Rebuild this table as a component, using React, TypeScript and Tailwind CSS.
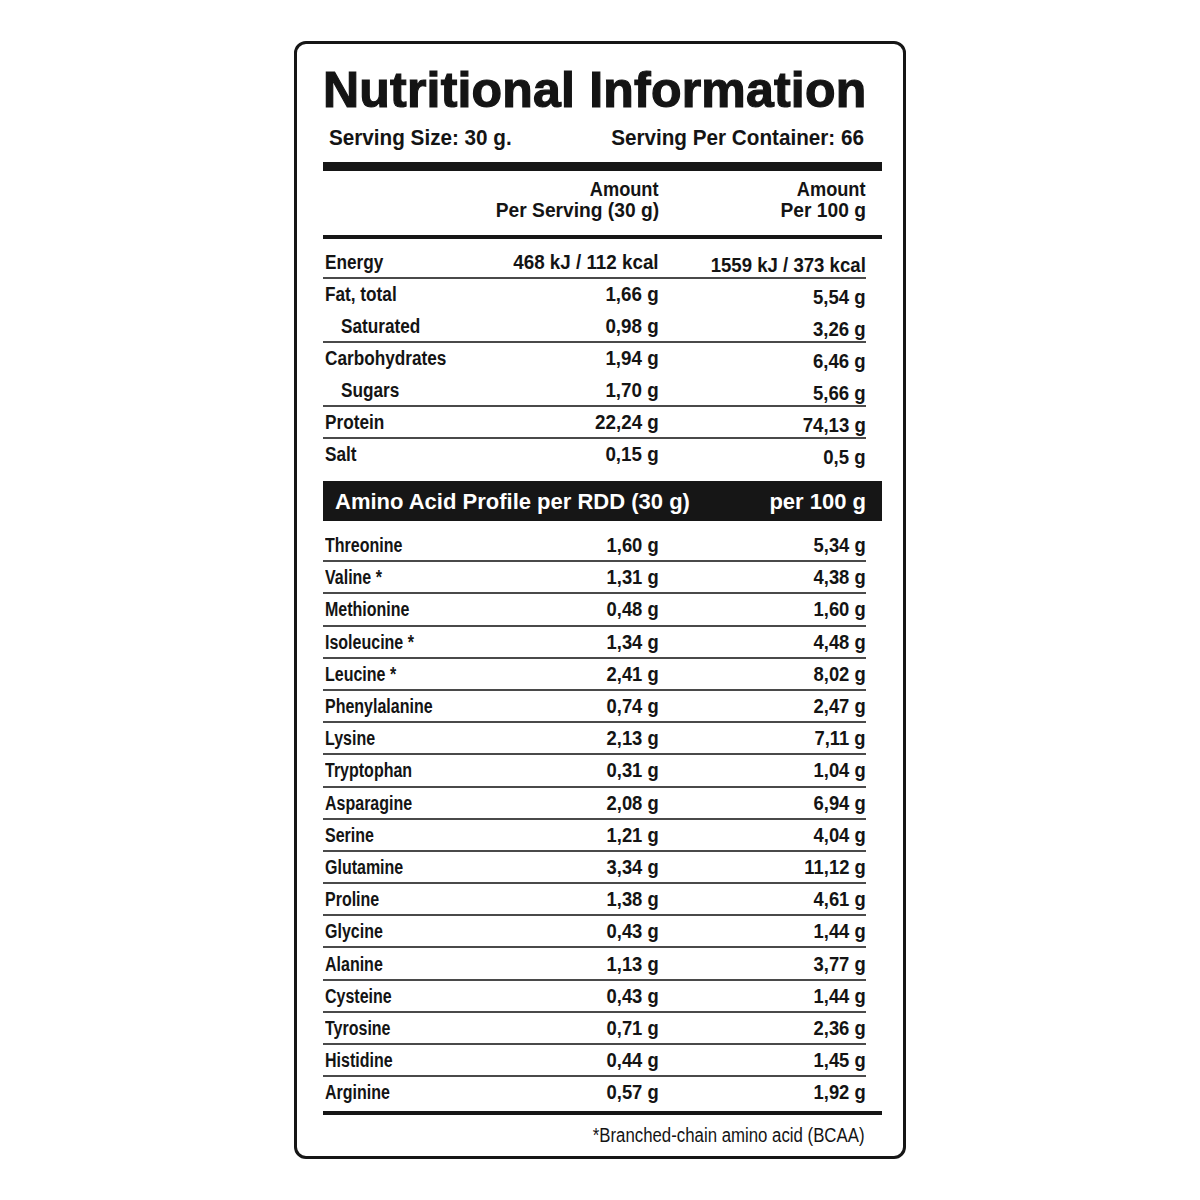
import type { ReactNode } from "react";

const sans = "font-['Liberation_Sans',Arial,sans-serif]";

interface Row {
  label: string;
  a: string;
  b: string;
  indent?: boolean;
  line?: boolean;
}

const nutrients: Row[] = [
  { label: "Energy", a: "468 kJ / 112 kcal", b: "1559 kJ / 373 kcal", line: true },
  { label: "Fat, total", a: "1,66 g", b: "5,54 g" },
  { label: "Saturated", a: "0,98 g", b: "3,26 g", indent: true, line: true },
  { label: "Carbohydrates", a: "1,94 g", b: "6,46 g" },
  { label: "Sugars", a: "1,70 g", b: "5,66 g", indent: true, line: true },
  { label: "Protein", a: "22,24 g", b: "74,13 g", line: true },
  { label: "Salt", a: "0,15 g", b: "0,5 g" },
];

const aminos: [string, string, string][] = [
  ["Threonine", "1,60 g", "5,34 g"],
  ["Valine *", "1,31 g", "4,38 g"],
  ["Methionine", "0,48 g", "1,60 g"],
  ["Isoleucine *", "1,34 g", "4,48 g"],
  ["Leucine *", "2,41 g", "8,02 g"],
  ["Phenylalanine", "0,74 g", "2,47 g"],
  ["Lysine", "2,13 g", "7,11 g"],
  ["Tryptophan", "0,31 g", "1,04 g"],
  ["Asparagine", "2,08 g", "6,94 g"],
  ["Serine", "1,21 g", "4,04 g"],
  ["Glutamine", "3,34 g", "11,12 g"],
  ["Proline", "1,38 g", "4,61 g"],
  ["Glycine", "0,43 g", "1,44 g"],
  ["Alanine", "1,13 g", "3,77 g"],
  ["Cysteine", "0,43 g", "1,44 g"],
  ["Tyrosine", "0,71 g", "2,36 g"],
  ["Histidine", "0,44 g", "1,45 g"],
  ["Arginine", "0,57 g", "1,92 g"],
];

// condensed look: squeeze Liberation Sans horizontally (no narrow face installed)
const Cond = ({ children, scale, right }: { children: ReactNode; scale: string; right?: boolean }) => (
  <span className={`inline-block whitespace-nowrap ${right ? "origin-right" : "origin-left"} ${scale}`}>{children}</span>
);

const App = () => {
  return (
    <div className={`flex min-h-[1200px] w-full justify-center bg-white pt-[41px] text-[#141414] ${sans}`}>
      <div className="flex h-[1118px] w-[612px] flex-col rounded-[12px] border-[3px] border-[#161616] pl-[26px] pr-[21px] pt-[21px]">
        {/* title */}
        <h1 className="h-[50px] whitespace-nowrap text-[50px] font-bold leading-[50px] tracking-[0.2px] [-webkit-text-stroke:1.2px_#141414]">
          Nutritional Information
        </h1>

        <div className="mt-[10px] flex h-[26px] items-center justify-between pl-[6px] pr-[18px] text-[22px] font-bold leading-[26px]">
          <Cond scale="scale-x-[0.94]">Serving Size: 30 g.</Cond>
          <Cond scale="scale-x-[0.94]" right>
            Serving Per Container: 66
          </Cond>
        </div>

        <div className="mt-[11px] h-[9px] bg-[#161616]" />

        {/* column header */}
        <div className="mr-[16px] mt-[8px] grid grid-cols-[minmax(0,1fr)_200px_207px] text-[20px] font-bold leading-[21px]">
          <span />
          <span className="text-right">
            <Cond scale="scale-x-[0.91]" right>
              Amount
            </Cond>
            <br />
            <Cond scale="scale-x-[0.96]" right>
              Per Serving (30 g)
            </Cond>
          </span>
          <span className="text-right">
            <Cond scale="scale-x-[0.91]" right>
              Amount
            </Cond>
            <br />
            <Cond scale="scale-x-[0.96]" right>
              Per 100 g
            </Cond>
          </span>
        </div>

        <div className="mt-[14px] h-[4px] bg-[#161616]" />

        {/* nutrients */}
        <div className="mr-[16px] mt-[8px] text-[20px] font-bold">
          {nutrients.map((r) => (
            <div
              key={r.label}
              className={`grid h-[32px] grid-cols-[minmax(0,1fr)_200px_207px] items-center border-b-2 leading-[24px] ${
                r.line ? "border-[#4a4a4a]" : "border-transparent"
              }`}
            >
              <span className={r.indent ? "pl-[18px]" : "pl-[2px]"}>
                <Cond scale="scale-x-[0.86]">{r.label}</Cond>
              </span>
              <span className="text-right">
                <Cond scale="scale-x-[0.94]" right>
                  {r.a}
                </Cond>
              </span>
              <span className="pt-[5px] text-right">
                <Cond scale="scale-x-[0.93]" right>
                  {r.b}
                </Cond>
              </span>
            </div>
          ))}
        </div>

        {/* amino header bar */}
        <div className="mt-[10px] flex h-[40px] items-center justify-between bg-[#161616] pl-[12px] pr-[16px] text-[22px] font-bold text-white">
          <span>Amino Acid Profile per RDD (30 g)</span>
          <span>per 100 g</span>
        </div>

        {/* amino rows */}
        <div className="mr-[16px] mt-[9px] text-[20px] font-bold">
          {aminos.map(([label, a, b], i) => (
            <div
              key={label}
              className={`grid h-[32.2px] grid-cols-[minmax(0,1fr)_200px_207px] items-center border-b-2 leading-[24px] ${
                i === aminos.length - 1 ? "border-transparent" : "border-[#4a4a4a]"
              }`}
            >
              <span className="pl-[2px]">
                <Cond scale="scale-x-[0.8]">{label}</Cond>
              </span>
              <span className="text-right">
                <Cond scale="scale-x-[0.92]" right>
                  {a}
                </Cond>
              </span>
              <span className="text-right">
                <Cond scale="scale-x-[0.92]" right>
                  {b}
                </Cond>
              </span>
            </div>
          ))}
        </div>

        <div className="mt-[2px] h-[4px] bg-[#161616]" />

        <p className="mr-[18px] mt-[8px] h-[24px] text-right text-[20px] leading-[24px]">
          <Cond scale="scale-x-[0.84]" right>
            *Branched-chain amino acid (BCAA)
          </Cond>
        </p>
      </div>
    </div>
  );
};

export default App;
